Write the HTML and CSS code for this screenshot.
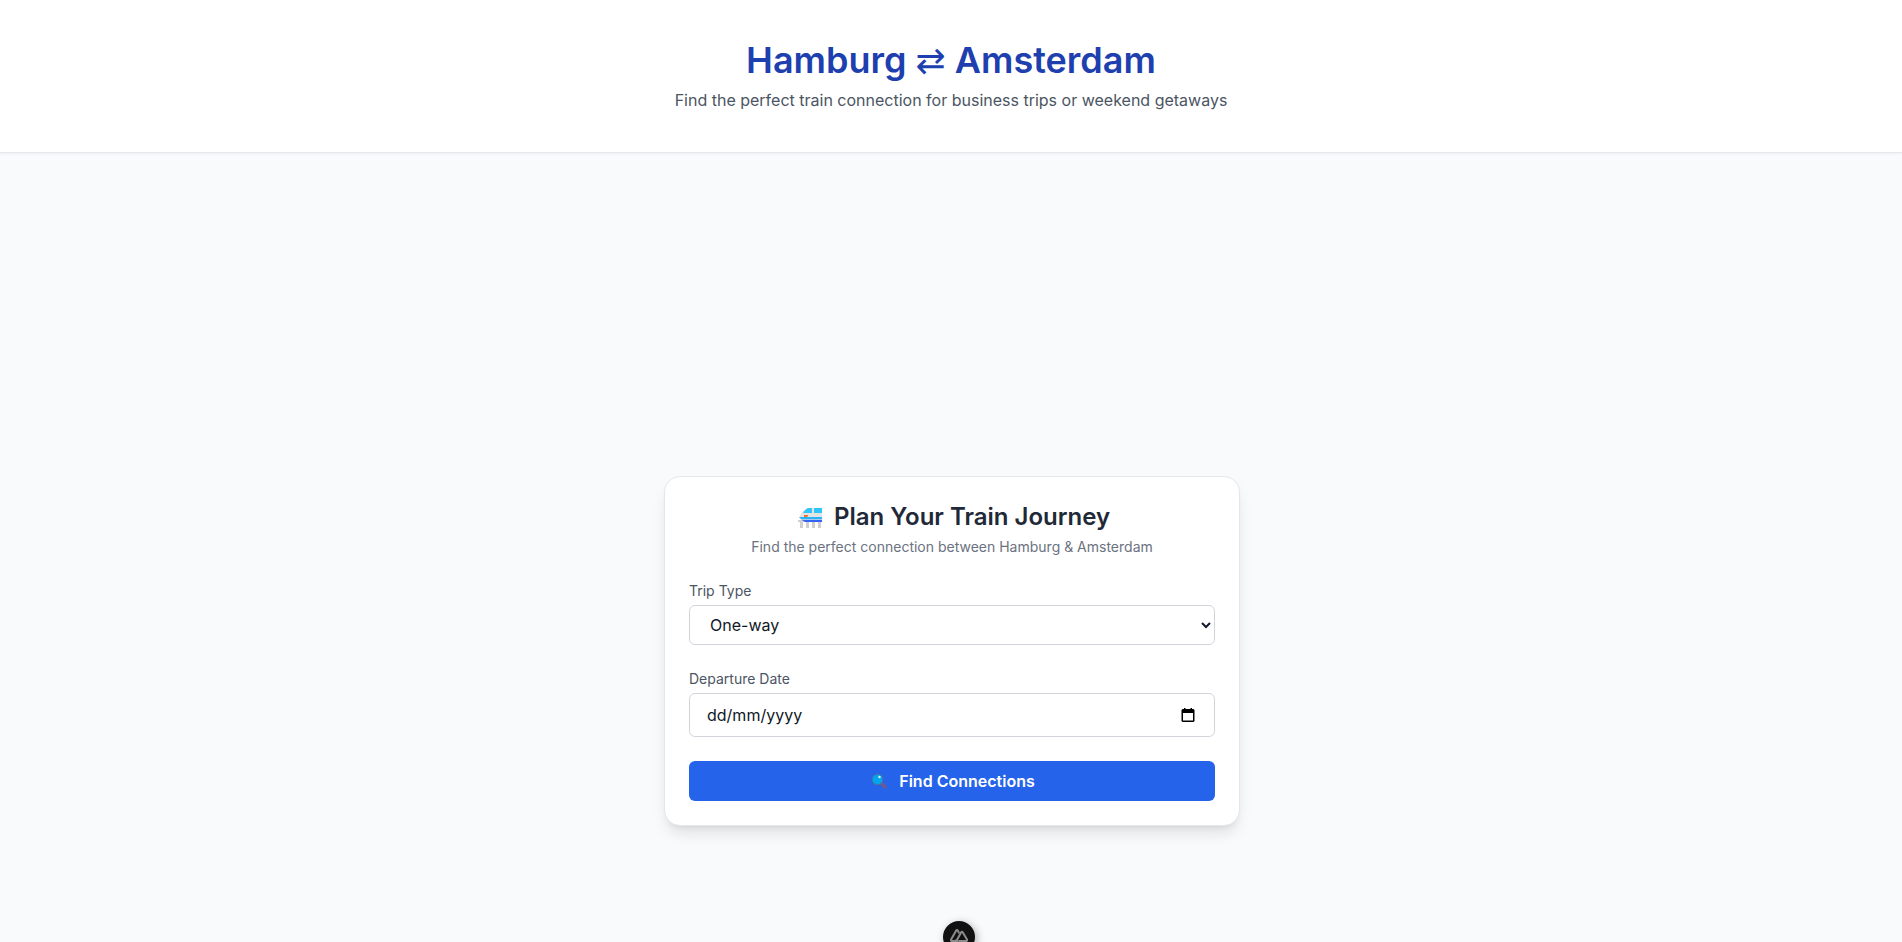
FILE: index.html
```html
<!DOCTYPE html>
<html lang="en-GB">
<head>
<meta charset="utf-8">
<meta name="viewport" content="width=device-width, initial-scale=1">
<title>Hamburg ⇄ Amsterdam</title>
<link rel="stylesheet" href="styles.css">
</head>
<body>
<header class="site-header">
  <h1 class="site-title">Hamburg <span class="swap">⇄</span> Amsterdam</h1>
  <p class="site-tagline">Find the perfect train connection for business trips or weekend getaways</p>
</header>
<main class="content">
  <section class="card">
    <h2 class="card-title">
      <svg class="train" viewBox="-4 0 28 24" aria-hidden="true">
        <path fill="#cfcfcf" d="M0 15h24v2h-1v6h-3v-6h-3v6h-3v-6h-3v6H8v-6H5v6H2v-6H0z"/>
        <path fill="#e4e4e4" d="M10 3h14v10H1c1-4 5-9 9-10z"/>
        <path fill="#2fc6fb" d="M10 3h4v5H5c1-2 3-4 5-5zM16 3h8v5h-8z"/>
        <path fill="#f26b2c" d="M6 10h4v1l-1 1H6z"/>
        <path fill="#28b4f5" d="M1 12h23v2H3z"/>
        <path fill="#a9c8f5" d="M2 14h22v1H4z"/>
        <path fill="#3563f4" d="M4 15h20v2H7z"/>
      </svg>
      <span>Plan Your Train Journey</span>
    </h2>
    <p class="card-subtitle">Find the perfect connection between Hamburg &amp; Amsterdam</p>
    <form class="form">
      <div class="field">
        <label class="label" for="trip">Trip Type</label>
        <select class="control select" id="trip"><option>One-way</option><option>Round trip</option></select>
      </div>
      <div class="field">
        <label class="label" for="departure">Departure Date</label>
        <div class="control date">
          <input class="date-input" id="departure" type="text" inputmode="numeric" placeholder="dd/mm/yyyy">
          <button class="picker" type="button" aria-label="Show date picker">
            <svg class="picker-icon" viewBox="0 0 16 16" aria-hidden="true"><path fill-rule="evenodd" d="M4 1h1.500v1h5V1H12v1h1.500l1 1v11l-1 1h-11l-1-1V3l1-1H4zM3 6v7.500h10V6z"/></svg>
          </button>
        </div>
      </div>
      <button class="submit" type="button">
        <svg class="search" viewBox="-2 0 18 16" aria-hidden="true">
          <path d="M10 10l4 4" stroke="#6d5a91" stroke-width="3.500" stroke-linecap="round"/>
          <circle cx="6.500" cy="6.500" r="5.500" fill="#00a6ed" stroke="#5b5f9e"/>
          <circle cx="8.500" cy="4" r="1.200" fill="#e8f6ff"/>
        </svg>
        <span>Find Connections</span>
      </button>
    </form>
  </section>
</main>
<button class="devtools" type="button" aria-label="Toggle devtools">
  <svg class="devtools-icon" viewBox="0 0 18 18" aria-hidden="true"><path d="M8.500 13H2c-1 0-1.400-.7-.9-1.500L6.200 2.600c.4-.7 1.200-.7 1.600 0l1.400 2.600"/><path d="M8.500 13h7.600c1 0 1.300-.7.9-1.500l-4.300-7.300c-.4-.7-1.100-.7-1.500 0L7.500 11c-.6 1.200-1.500 2-3 2"/></svg>
</button>
</body>
</html>
```
FILE: styles.css
```css
*, *::before, *::after { box-sizing: border-box; }

body {
  margin: 0;
  min-height: 100vh;
  display: flex;
  flex-direction: column;
  background: #f9fafb;
  color: #111827;
  font-family: Inter, "Liberation Sans", sans-serif;
  font-size: 16px;
  line-height: 24px;
}

h1, h2, p { margin: 0; }

.site-header {
  padding: 40px 16px;
  background: #fff;
  border-bottom: 1px solid #e5e7eb;
  box-shadow: 0 1px 2px rgba(0, 0, 0, .05);
  text-align: center;
}

.site-title {
  margin-bottom: 8px;
  color: #1e40af;
  font-size: 36px;
  font-weight: 600;
  line-height: 40px;
}

.swap {
  font-family: "DejaVu Sans", sans-serif;
  font-weight: 400;
  line-height: 1;
}

.site-tagline { color: #4b5563; }

.content {
  flex: 1;
  display: flex;
  justify-content: center;
  align-items: flex-start;
  padding: 323px 16px 64px 18px;
}

.card {
  width: 100%;
  max-width: 576px;
  padding: 24px;
  background: #fff;
  border: 1px solid #e5e7eb;
  border-radius: 16px;
  box-shadow: 0 10px 15px -3px rgba(0, 0, 0, .1), 0 4px 6px -4px rgba(0, 0, 0, .1);
}

.card-title {
  display: flex;
  justify-content: center;
  align-items: center;
  gap: 12px;
  margin-bottom: 4px;
  color: #1f2937;
  font-size: 24px;
  font-weight: 600;
  line-height: 32px;
}

.train { width: 28px; height: 24px; }

.card-subtitle {
  color: #6b7280;
  font-size: 14px;
  line-height: 20px;
  text-align: center;
}

.form {
  display: flex;
  flex-direction: column;
  gap: 24px;
  margin-top: 24px;
}

.field {
  display: flex;
  flex-direction: column;
  gap: 4px;
}

.label {
  color: #4b5563;
  font-size: 14px;
  line-height: 20px;
}

.control {
  width: 100%;
  background: #fff;
  border: 1px solid #d1d5db;
  border-radius: 6px;
  color: #111827;
  font: inherit;
}

.select { height: 40px; padding: 0 0 0 16px; }

.date {
  display: flex;
  align-items: center;
  height: 44px;
  padding: 0 18px 0 17px;
}

.date-input {
  flex: 1;
  min-width: 0;
  padding: 0;
  border: 0;
  outline: 0;
  background: none;
  color: inherit;
  font: inherit;
}

.date-input::placeholder { color: #111827; opacity: 1; }

.picker {
  display: flex;
  padding: 0;
  border: 0;
  background: none;
}

.picker-icon { width: 16px; height: 16px; }

.submit {
  display: flex;
  justify-content: center;
  align-items: center;
  gap: 12px;
  height: 40px;
  border: 0;
  border-radius: 6px;
  background: #2563eb;
  color: #fff;
  font: inherit;
  font-weight: 600;
}

.search { width: 18px; height: 16px; }

.devtools {
  position: fixed;
  bottom: -11px;
  left: 50%;
  display: flex;
  justify-content: center;
  align-items: center;
  width: 32px;
  height: 32px;
  margin-left: -8px;
  padding: 0;
  border: 0;
  border-radius: 50%;
  background: #111;
  box-shadow: 2px 2px 8px rgba(0, 0, 0, .3);
}

.devtools-icon {
  width: 18px;
  height: 18px;
  fill: none;
  stroke: #8c8c8c;
  stroke-width: 2;
  stroke-linejoin: round;
}
```
